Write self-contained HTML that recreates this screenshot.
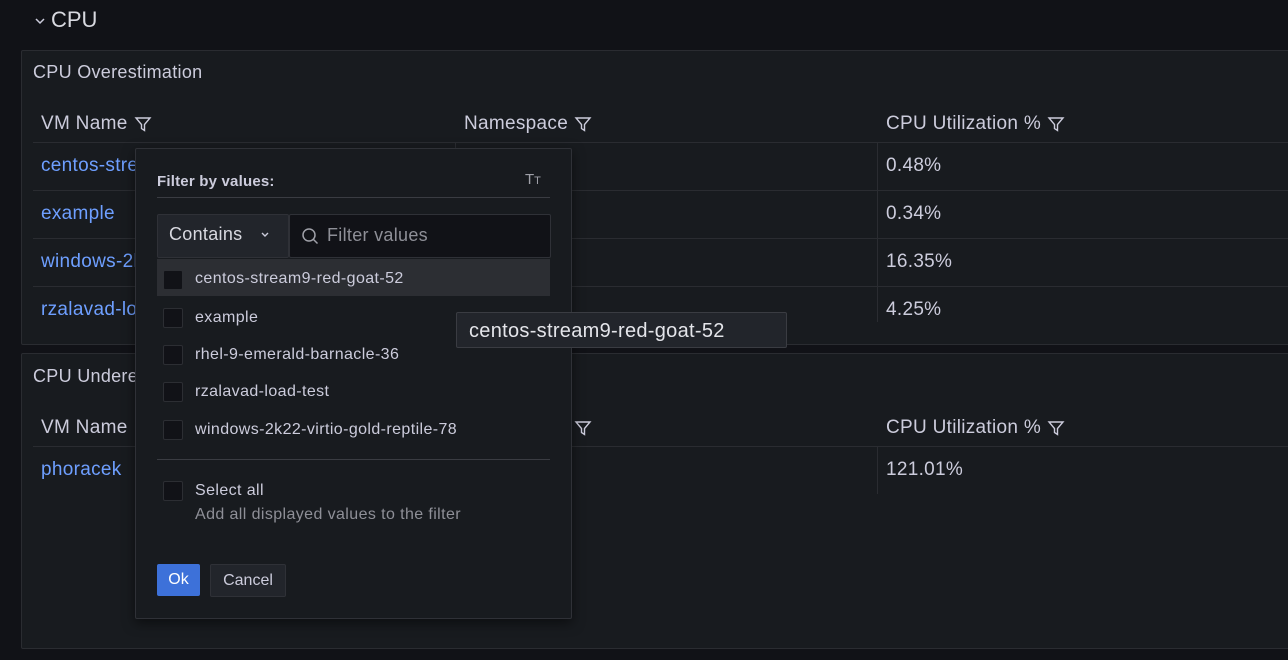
<!DOCTYPE html><html><head><style>
body{margin:0;width:1288px;height:660px;background:#111217;font-family:"Liberation Sans",sans-serif;color:#ccccdc;position:relative;overflow:hidden}
.a{position:absolute;white-space:nowrap}
.panel{position:absolute;left:21px;width:1290px;background:#181b1f;border:1px solid #2a2c31;border-radius:2px}
.t{font-size:18px;color:#ccccdc;letter-spacing:0.3px}
.h{font-size:19px;color:#ccccdc;letter-spacing:0.3px;display:flex;align-items:center}
.h svg{margin-left:6px}
.l{font-size:19px;color:#6e9fff;letter-spacing:0.3px}
.v{font-size:19px;color:#ccccdc;letter-spacing:0.3px}
.line{position:absolute;height:1px;background:#2a2c31}
.vl{position:absolute;width:1px;background:#2a2c31}
.cb{position:absolute;left:163px;width:18px;height:18px;background:#111217;border:1px solid #2c2e33;border-radius:2px}
.it{position:absolute;left:195px;font-size:16px;color:#ccccdc;letter-spacing:0.4px}
</style></head><body>
<svg class="a" style="left:34px;top:17px" width="12" height="8" viewBox="0 0 12 8" fill="none" stroke="#ccccdc" stroke-width="1.5"><path d="M2 2l4 4 4-4"/></svg>
<div class="a" style="left:51px;top:7px;font-size:22px;color:#d8d9e0">CPU</div>

<div class="panel" style="top:50px;height:293px"></div>
<div class="a t" style="left:33px;top:62px">CPU Overestimation</div>
<div class="a h" style="left:41px;top:113px">VM Name<svg width="18" height="18" viewBox="0 0 18 18" fill="none" stroke="#ccccdc" stroke-width="1.4"><path d="M2 3h14l-5.5 6.5v6l-3-2v-4z"/></svg></div>
<div class="a h" style="left:464px;top:113px">Namespace<svg width="18" height="18" viewBox="0 0 18 18" fill="none" stroke="#ccccdc" stroke-width="1.4"><path d="M2 3h14l-5.5 6.5v6l-3-2v-4z"/></svg></div>
<div class="a h" style="left:886px;top:113px">CPU Utilization %<svg width="18" height="18" viewBox="0 0 18 18" fill="none" stroke="#ccccdc" stroke-width="1.4"><path d="M2 3h14l-5.5 6.5v6l-3-2v-4z"/></svg></div>
<div class="line" style="left:33px;top:142px;width:1260px"></div>
<div class="line" style="left:33px;top:190px;width:1260px"></div>
<div class="line" style="left:33px;top:238px;width:1260px"></div>
<div class="line" style="left:33px;top:286px;width:1260px"></div>
<div class="vl" style="left:455px;top:142px;height:180px"></div>
<div class="vl" style="left:877px;top:142px;height:180px"></div>
<div class="a l" style="left:41px;top:155px">centos-stream9</div>
<div class="a l" style="left:41px;top:203px">example</div>
<div class="a l" style="left:41px;top:251px">windows-2k22</div>
<div class="a l" style="left:41px;top:299px">rzalavad-load</div>
<div class="a v" style="left:886px;top:155px">0.48%</div>
<div class="a v" style="left:886px;top:203px">0.34%</div>
<div class="a v" style="left:886px;top:251px">16.35%</div>
<div class="a v" style="left:886px;top:299px">4.25%</div>

<div class="panel" style="top:353px;height:294px"></div>
<div class="a t" style="left:33px;top:366px">CPU Underestimation</div>
<div class="a h" style="left:41px;top:417px">VM Name</div>
<div class="a h" style="left:464px;top:417px">Namespace<svg width="18" height="18" viewBox="0 0 18 18" fill="none" stroke="#ccccdc" stroke-width="1.4"><path d="M2 3h14l-5.5 6.5v6l-3-2v-4z"/></svg></div>
<div class="a h" style="left:886px;top:417px">CPU Utilization %<svg width="18" height="18" viewBox="0 0 18 18" fill="none" stroke="#ccccdc" stroke-width="1.4"><path d="M2 3h14l-5.5 6.5v6l-3-2v-4z"/></svg></div>
<div class="line" style="left:33px;top:446px;width:1260px"></div>
<div class="vl" style="left:877px;top:446px;height:48px"></div>
<div class="a l" style="left:41px;top:459px">phoracek</div>
<div class="a v" style="left:886px;top:459px">121.01%</div>

<div class="a" style="left:135px;top:148px;width:435px;height:469px;background:#181b1f;border:1px solid #2f3137;border-radius:2px;box-shadow:0 4px 12px rgba(0,0,0,.5)"></div>
<div class="a" style="left:157px;top:173px;font-size:15px;color:#ccccdc;font-weight:bold;letter-spacing:0.2px">Filter by values:</div>
<div class="a" style="left:525px;top:171px;font-size:15px;color:#9fa0a8">T<span style="font-size:11px">T</span></div>
<div class="line" style="left:157px;top:197px;width:393px;background:#3a3c42"></div>
<div class="a" style="left:157px;top:214px;width:130px;height:42px;background:#22252b;border:1px solid #2f3137;border-radius:2px"></div>
<div class="a" style="left:169px;top:224px;font-size:18px;color:#d8d9e0;letter-spacing:0.3px">Contains</div>
<svg class="a" style="left:260px;top:231px" width="10" height="8" viewBox="0 0 10 8" fill="none" stroke="#ccccdc" stroke-width="1.4"><path d="M2 2l3 3 3-3"/></svg>
<div class="a" style="left:289px;top:214px;width:260px;height:42px;background:#111217;border:1px solid #2f3137;border-radius:2px"></div>
<svg class="a" style="left:300px;top:226px" width="20" height="20" viewBox="0 0 20 20" fill="none" stroke="#9fa0a8" stroke-width="1.5"><circle cx="9" cy="9" r="6"/><path d="M13.5 13.5l4 4"/></svg>
<div class="a" style="left:327px;top:225px;font-size:18px;color:#8e8f97;letter-spacing:0.3px">Filter values</div>
<div class="a" style="left:157px;top:259px;width:393px;height:37px;background:#2c2e33"></div>
<div class="cb" style="top:270px"></div><div class="it" style="top:270px">centos-stream9-red-goat-52</div>
<div class="cb" style="top:308px"></div><div class="it" style="top:309px">example</div>
<div class="cb" style="top:345px"></div><div class="it" style="top:346px">rhel-9-emerald-barnacle-36</div>
<div class="cb" style="top:382px"></div><div class="it" style="top:383px">rzalavad-load-test</div>
<div class="cb" style="top:420px"></div><div class="it" style="top:421px">windows-2k22-virtio-gold-reptile-78</div>
<div class="line" style="left:157px;top:459px;width:393px;background:#3a3c42"></div>
<div class="cb" style="top:481px"></div><div class="it" style="top:482px">Select all</div>
<div class="a" style="left:195px;top:506px;font-size:16px;color:#8e8f97;letter-spacing:0.4px">Add all displayed values to the filter</div>
<div class="a" style="left:157px;top:564px;width:43px;height:32px;background:#3d71d9;border-radius:2px;color:#fff;font-size:16px;line-height:32px;text-align:center">Ok</div>
<div class="a" style="left:210px;top:564px;width:74px;height:31px;background:#22252b;border:1px solid #2f3137;border-radius:2px;color:#ccccdc;font-size:16px;line-height:31px;text-align:center">Cancel</div>

<div class="a" style="left:456px;top:312px;width:331px;height:36px;background:#22252b;border:1px solid #3a3c42;border-radius:2px;color:#e4e5ea;font-size:20px;line-height:36px;padding-left:12px;box-sizing:border-box;letter-spacing:0.3px">centos-stream9-red-goat-52</div>
</body></html>
